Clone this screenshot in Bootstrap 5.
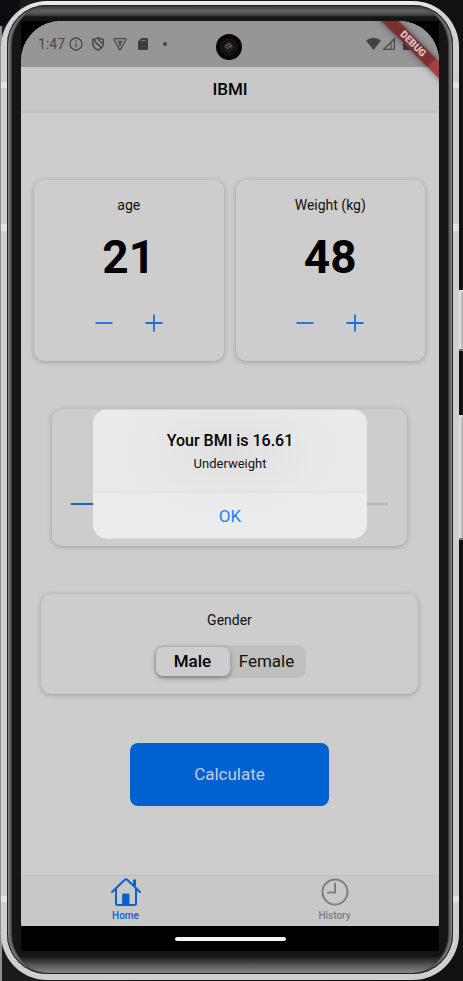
<!DOCTYPE html>
<html lang="en">
<head>
<meta charset="utf-8">
<meta name="viewport" content="width=device-width, initial-scale=1">
<title>IBMI</title>
<link href="https://cdn.jsdelivr.net/npm/bootstrap@5.3.0/dist/css/bootstrap.min.css" rel="stylesheet">
<style>
body{font-family:Roboto,"Liberation Sans",sans-serif;background:linear-gradient(90deg,#8e8e8e 2px,#1b1b1b 2px,#111);color:#111;overflow-x:hidden}
.desk{min-height:100vh;padding:1px 4px 1px 1px;position:relative}
.desk::before{content:"";position:absolute;left:0;top:0;width:20px;height:26px;background:#0b0d13}
.shell{position:relative;flex:1;padding:4px 6px 6px;border-radius:46px;background:linear-gradient(#eee,#d2d2d2 12px,#cfcfcf 81px,#e4e4e4 81px 87px,#cfcfcf 87px 223px,#e4e4e4 223px 230px,#cfcfcf 230px calc(100% - 84px),#e4e4e4 calc(100% - 84px) calc(100% - 78px),#cfcfcf calc(100% - 78px))}
.bezel{flex:1;padding:16px 14px 23px;border-radius:40px;background:linear-gradient(#333,#606060 6px,#444 10px,#151515 12px,#151515 calc(100% - 18px),#555 calc(100% - 9px),#8c8c8c);box-shadow:inset 0 0 0 1px #222,inset 2px 0 0 #858585,inset -2px 0 0 #858585,inset 4px 0 0 #666,inset -4px 0 0 #666,inset 5px 0 0 #3a3a3a,inset -5px 0 0 #3a3a3a}
.bezel-in{flex:1;background:#000}
.screen{flex:1;border-radius:40px 40px 30px 30px;overflow:hidden;position:relative;background:#000}
.app{flex:1;position:relative;background:#cdcdcd}
.status{height:46px;padding:0 17px;background:#969696;color:#484848;font-size:14px;position:relative}
.status svg{display:block}
.camera{position:absolute;left:50%;top:13px;margin-left:-14px}
.ribbon{position:absolute;right:-34px;top:17px;width:120px;height:12px;line-height:12px;font-size:10px;font-weight:900;text-align:center;color:#d8c4c4;background:linear-gradient(90deg,#7b2f2f 72%,#a44040 72%);transform:rotate(45deg);box-shadow:0 0 6px rgba(0,0,0,.5);z-index:3}
.topbar{height:46px;background:#c8c8c8;border-bottom:2px solid #bfbfbf;font-size:17px;line-height:24px;font-weight:500;color:#000;margin:0}
.main-area{padding:67px 14px 0 13px}
.tile{background:#cdcdcd;border-radius:10px;box-shadow:0 1px 5px rgba(0,0,0,.24)}
.measure{flex:1 1 0;padding:14px 0 21px}
.caption-text{font-size:14px;line-height:22px}
.figure-text{font-size:46px;line-height:56px;font-weight:700;color:#000;margin:13px 0 21px}
.step{background:none;border:0;padding:8px;line-height:0;color:#1a6fd8}
.slide-tile{margin:48px 18px 0;padding:83px 19px 30px}
.slide-tile input{appearance:none;display:block;width:100%;height:24px;margin:0;background:linear-gradient(90deg,#1767c9 45%,#b5b5b5 45%) center/100% 2px no-repeat}
.slide-tile input::-webkit-slider-thumb{appearance:none;width:24px;height:24px;border-radius:50%;background:#cdcdcd}
.gender-tile{margin:48px 7px 0;padding:15px 0 16px}
.seg{border-radius:9px;background:#bfbfbf;padding:2px;width:152px;margin:14px auto 0}
.seg label{flex:1;height:29px;line-height:29px;font-size:17px;text-align:center;border-radius:7px}
.seg input:checked+label{background:#cdcdcd;font-weight:500;color:#000;box-shadow:0 2px 5px rgba(0,0,0,.35)}
.calc{margin:49px auto 0;padding:19px 64px;font-size:17px;line-height:25px;color:#c5cbd5;background:#0062d0;border:0;border-radius:8px}
.tabs{background:#c8c8c8;border-top:1px solid #bfbfbf;height:51px;margin-top:auto;font-size:10px;line-height:12px;font-weight:500}
.tabs a{flex:1;color:#7e7e7e;text-decoration:none;padding-top:2px}
.tabs a.on{color:#0a62cd}
.tabs svg{display:block;margin-bottom:3px}
.alert-pane{position:absolute;left:50%;top:50%;transform:translate(-50%,-50%);width:274px;border-radius:14px;overflow:hidden;background:radial-gradient(ellipse at 50% 32%,#dfdfdf,#e9e9e9 45%,#ebebeb)}
.alert-pane h2{font-size:16px;line-height:22px;font-weight:500;color:#000;margin:0;padding-top:20px}
.alert-pane p{font-size:13px;line-height:18px;margin:3px 0 19px}
.ok{border:0;border-top:1px solid #dcdcde;background:rgba(235,236,238,.6);color:#1a80ff;font-size:17px;line-height:46px;padding:0;width:100%}
.gesture{height:25px;background:#000}
.gesture span{width:111px;height:4px;border-radius:2px;background:#f4f4f4}
.side-key{position:absolute;right:0;width:4px;background:linear-gradient(90deg,#eee,#aaa);border-top:2px solid #ddd;border-bottom:2px solid #777}
.power{top:290px;height:61px}
.volume{top:415px;height:125px}
</style>
<script src="https://cdn.jsdelivr.net/npm/bootstrap@5.3.0/dist/js/bootstrap.bundle.min.js"></script>
</head>
<body>
<div class="desk d-flex flex-column">
<span class="side-key power"></span><span class="side-key volume"></span>
<div class="shell d-flex flex-column"><div class="bezel d-flex flex-column"><div class="bezel-in d-flex flex-column"><div class="screen d-flex flex-column">
  <div class="app d-flex flex-column">
    <div class="status d-flex align-items-center">
      <span>1:47</span>
      <svg class="ms-1" width="14" height="14" viewBox="0 0 14 14" fill="none" stroke="currentColor" stroke-width="1.3"><circle cx="7" cy="7" r="6"/><path d="M7 6.2v4M7 3.6v1.4"/></svg>
      <svg class="ms-2" width="14" height="14" viewBox="1 0 14 14" fill="none" stroke="currentColor" stroke-width="1.500"><path d="M8 .9 2.800 2.600v4c0 3 2.300 5.300 5.200 6.500 2.900-1.200 5.200-3.500 5.200-6.500v-4zM4.500 3q1 3 3.500 4.500t2.800 3.200M8 1.200Q9 4 12.500 6.500"/></svg>
      <svg class="ms-2" width="14" height="14" viewBox="0 0 14 14"><path d="M1.600 1.700h10.800q1 0 .5 1L7.500 12.300q-.5.8-1 0L1.100 2.700q-.5-1 .5-1z" fill="none" stroke="currentColor" stroke-width="1.300"/><path d="M4.200 3.700h5.600v.9H4.200zM5.700 7.200h2.600L7 10z" fill="currentColor"/><circle cx="7" cy="5.600" r="1.600" fill="currentColor"/></svg>
      <svg class="ms-2" width="16" height="14" viewBox="0 0 16 14"><path d="M6.500 1H12q1 0 1 1v10q0 1-1 1H4q-1 0-1-1V4.500z" fill="#3d3d3d"/><path d="M6.500 3.500h4" stroke="#777"/></svg>
      <svg class="ms-1" width="20" height="14" viewBox="0 0 20 14"><circle cx="10" cy="7" r="2" fill="#444"/></svg>
      <svg class="camera" width="26" height="26" viewBox="0 0 26 26"><circle cx="13" cy="13" r="13" fill="#070707"/><circle cx="13" cy="13" r="8" fill="#111" stroke="#1c1c1c"/><circle cx="13" cy="13" r="5" fill="#221e1b"/><path d="M10 14q-1-4 4-4M11 15l3-3" stroke="#8a745e" stroke-width="1" fill="none"/><circle cx="15" cy="12" r="1.500" fill="#704565"/></svg>
      <svg class="ms-auto" width="56" height="14" viewBox="0 0 56 14" fill="#414141"><path d="M0 3.500Q7.500-2 15 3.500L7.500 13z"/><path d="M28.300 1.800v10.500H17.800z" fill="none" stroke="#4a4a4a" stroke-width="1.300"/><path d="M25 5v7" stroke="#4a4a4a"/><path d="M37 1h2V0h3v1h2v12h-7z"/></svg>
    </div>
    <h1 class="topbar d-flex align-items-center justify-content-center">IBMI</h1>
    <main class="main-area d-flex flex-column">
      <div class="d-flex" id="measures">
        <section class="tile measure text-center me-1">
          <div class="caption-text">age</div>
          <div class="figure-text">21</div>
          <div class="d-flex justify-content-center gap-3 step-row">
            <button class="step" aria-label="Decrease age"><svg width="18" height="18" viewBox="0 0 18 18" stroke="currentColor" stroke-width="1.800"><path d="M.5 9h17"/></svg></button>
            <button class="step" aria-label="Increase age"><svg width="18" height="18" viewBox="0 0 18 18" stroke="currentColor" stroke-width="1.800"><path d="M.5 9h17M9 .5v17"/></svg></button>
          </div>
        </section>
        <section class="tile measure text-center ms-2">
          <div class="caption-text">Weight (kg)</div>
          <div class="figure-text">48</div>
          <div class="d-flex justify-content-center gap-3 step-row">
            <button class="step" aria-label="Decrease weight"><svg width="18" height="18" viewBox="0 0 18 18" stroke="currentColor" stroke-width="1.800"><path d="M.5 9h17"/></svg></button>
            <button class="step" aria-label="Increase weight"><svg width="18" height="18" viewBox="0 0 18 18" stroke="currentColor" stroke-width="1.800"><path d="M.5 9h17M9 .5v17"/></svg></button>
          </div>
        </section>
      </div>
      <section class="tile slide-tile"><input type="range" min="0" max="240" value="110" aria-label="Height"></section>
      <section class="tile gender-tile">
        <div class="caption-text text-center">Gender</div>
        <div class="seg d-flex">
          <input class="visually-hidden" type="radio" name="gender" id="male" checked><label for="male">Male</label>
          <input class="visually-hidden" type="radio" name="gender" id="female"><label for="female">Female</label>
        </div>
      </section>
      <button class="calc">Calculate</button>
    </main>
    <nav class="tabs d-flex">
      <a href="#" class="on d-flex flex-column align-items-center">
        <svg width="30" height="29" viewBox="0 0 30 29" fill="none" stroke="currentColor" stroke-width="2" stroke-linecap="round" stroke-linejoin="round"><path d="M1 14 13.500 2q1.500-1.400 3 0L29 14M5 11v14.500q0 1.500 1.500 1.500h17q1.500 0 1.500-1.500V11"/><path d="M23.500 1.500V8" stroke-width="3" stroke-linecap="butt"/><path d="M12 16h6v11h-6z" fill="currentColor" stroke-width="1"/></svg>Home</a>
      <a href="#" class="d-flex flex-column align-items-center">
        <svg width="30" height="29" viewBox="0 0 30 29" fill="none" stroke="currentColor" stroke-width="2" stroke-linecap="round"><circle cx="15" cy="14" r="12.500"/><path d="M15 5.500V14.500H8"/></svg>History</a>
    </nav>
    <div class="alert-pane text-center" role="dialog" aria-labelledby="result">
      <h2 id="result">Your BMI is 16.61</h2>
      <p>Underweight</p>
      <button class="ok">OK</button>
    </div>
    <div class="ribbon">DEBUG</div>
  </div>
  <div class="gesture d-flex align-items-center justify-content-center"><span></span></div>
</div></div></div></div>
</div>
</body>
</html>
